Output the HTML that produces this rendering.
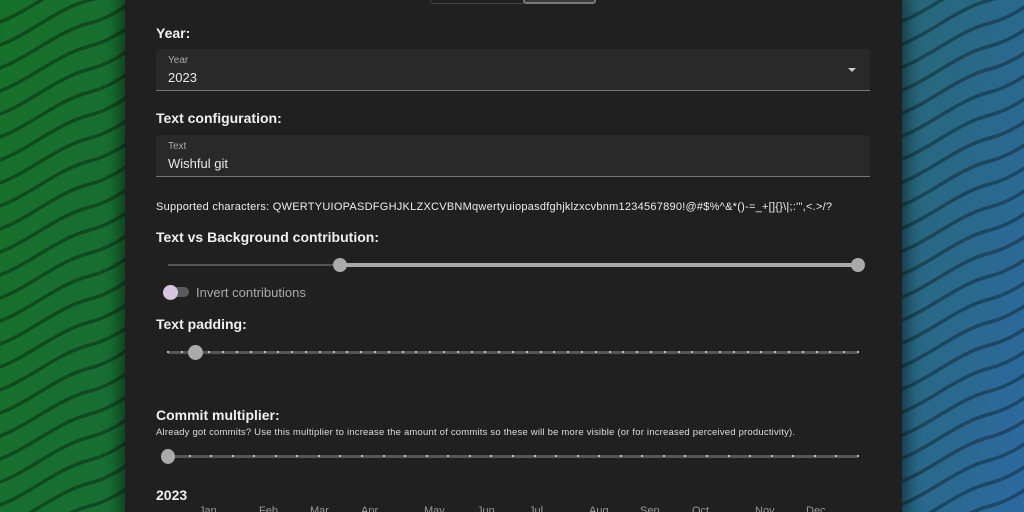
<!DOCTYPE html><html><head><style>
*{margin:0;padding:0;box-sizing:border-box}
html,body{width:1024px;height:512px;overflow:hidden}
body{position:relative;font-family:"Liberation Sans",sans-serif;background:linear-gradient(100deg,#17702a 0%,#1d6a45 45%,#25686a 75%,#2d69a0 100%)}
.panel{position:absolute;left:125px;top:0;width:777px;height:512px;background:#202020;box-shadow:0 0 14px 6px rgba(0,0,0,.45)}
.a{position:absolute;color:#eee;white-space:nowrap}
h3{position:absolute;left:156px;font-size:14px;font-weight:bold;color:#f0f0f0}
.fld{position:absolute;left:156px;width:714px;height:42px;background:#292929;border-bottom:1px solid #777;border-radius:4px 4px 0 0}
.fld .l{position:absolute;left:12px;top:6px;font-size:10px;color:#aaa}
.fld .v{position:absolute;left:12px;top:21px;font-size:13px;color:#e8e8e8}
.mw{position:absolute;left:0;top:504px;width:1024px;height:8px;overflow:hidden}
.m{position:absolute;top:1px;font-size:11px;color:#999;line-height:12px}
</style></head><body>
<svg width="1024" height="512" style="position:absolute;left:0;top:0">
<g id="g1" fill="none" stroke="rgba(0,0,0,.32)" stroke-width="3.5"></g>
</svg>
<div class="panel"></div>
<div style="position:absolute;left:430px;top:-4px;width:94px;height:8px;border:1px solid #444;border-radius:3px;background:#1e1e1e"></div>
<div style="position:absolute;left:523px;top:-4px;width:73px;height:8px;border:2px solid #777;border-radius:3px;background:#3a3a3a"></div>
<h3 style="top:25px">Year:</h3>
<div class="fld" style="top:49px"><div class="l">Year</div><div class="v">2023</div>
<div style="position:absolute;right:14px;top:19px;width:0;height:0;border-left:4px solid transparent;border-right:4px solid transparent;border-top:4px solid #ccc"></div></div>
<h3 style="top:110px">Text configuration:</h3>
<div class="fld" style="top:135px"><div class="l">Text</div><div class="v">Wishful git</div></div>
<div class="a" style="left:156px;top:201px;font-size:11px;letter-spacing:0.25px">Supported characters: QWERTYUIOPASDFGHJKLZXCVBNMqwertyuiopasdfghjklzxcvbnm1234567890!@#$%^&amp;*()-=_+[]{}\|;:'",&lt;.&gt;/?</div>
<h3 style="top:229px">Text vs Background contribution:</h3>
<div style="position:absolute;left:168px;top:264px;width:172px;height:2px;background:#555"></div>
<div style="position:absolute;left:340px;top:263px;width:518px;height:4px;background:#aaa"></div>
<div style="position:absolute;left:333px;top:258px;width:14px;height:14px;border-radius:50%;background:#aaa"></div>
<div style="position:absolute;left:851px;top:258px;width:14px;height:14px;border-radius:50%;background:#aaa"></div>
<div style="position:absolute;left:166px;top:287px;width:23px;height:10px;border-radius:5px;background:#5a5a5a"></div>
<div style="position:absolute;left:163px;top:285px;width:15px;height:15px;border-radius:50%;background:#d6c4e0"></div>
<div class="a" style="left:196px;top:285px;font-size:13px;color:#aaa">Invert contributions</div>
<h3 style="top:316px">Text padding:</h3>
<div style="position:absolute;left:168px;top:351px;width:690px;height:3px;background:#555"></div>
<div id="d1"></div>
<div style="position:absolute;left:188px;top:345px;width:15px;height:15px;border-radius:50%;background:#aaa"></div>
<h3 style="top:407px">Commit multiplier:</h3>
<div class="a" style="left:156px;top:427px;font-size:9.5px;color:#ddd;letter-spacing:0.2px">Already got commits? Use this multiplier to increase the amount of commits so these will be more visible (or for increased perceived productivity).</div>
<div style="position:absolute;left:168px;top:455px;width:690px;height:3px;background:#555"></div>
<div id="d2"></div>
<div style="position:absolute;left:161px;top:449px;width:14px;height:15px;border-radius:50%;background:#aaa"></div>
<h3 style="top:487px">2023</h3>
<div class="mw">
<div class="m" style="left:199px">Jan</div><div class="m" style="left:259px">Feb</div><div class="m" style="left:310px">Mar</div><div class="m" style="left:361px">Apr</div><div class="m" style="left:424px">May</div><div class="m" style="left:477px">Jun</div><div class="m" style="left:529px">Jul</div><div class="m" style="left:589px">Aug</div><div class="m" style="left:640px">Sep</div><div class="m" style="left:692px">Oct</div><div class="m" style="left:755px">Nov</div><div class="m" style="left:806px">Dec</div>
</div>
<script>
var g=document.getElementById('g1'),s='';
for(var i=-20;i<40;i++){var o=i*23;
s+='<path d="M-20 '+(o+50)+' C 20 '+(o+45)+', 50 '+(o+10)+', 90 '+(o)+' S 150 '+(o-45)+', 200 '+(o-55)+'"/>';
s+='<path d="M880 '+(o+50)+' C 920 '+(o+45)+', 950 '+(o+10)+', 990 '+(o)+' S 1050 '+(o-45)+', 1100 '+(o-55)+'"/>';}
g.innerHTML=s;
var h='';for(var x=168;x<=858;x+=13.8){h+='<div style="position:absolute;left:'+(x-1)+'px;top:351px;width:2px;height:2px;background:#bbb"></div>'}
document.getElementById('d1').innerHTML=h;
h='';for(var x=168;x<=858;x+=21.56){h+='<div style="position:absolute;left:'+(x-1)+'px;top:455px;width:2px;height:2px;background:#bbb"></div>'}
document.getElementById('d2').innerHTML=h;
</script>
</body></html>
